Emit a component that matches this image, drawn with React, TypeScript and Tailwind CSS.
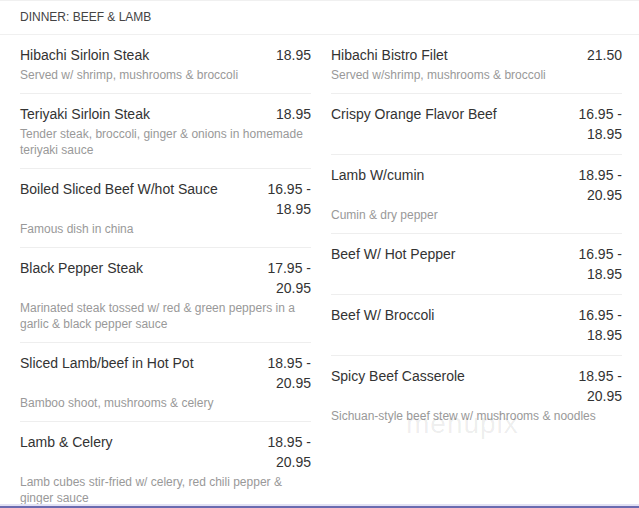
import React from 'react';

type Item = { name: string; price: string; desc?: string };

const left: Item[] = [
  { name: 'Hibachi Sirloin Steak', price: '18.95', desc: 'Served w/ shrimp, mushrooms & broccoli' },
  { name: 'Teriyaki Sirloin Steak', price: '18.95', desc: 'Tender steak, broccoli, ginger & onions in homemade teriyaki sauce' },
  { name: 'Boiled Sliced Beef W/hot Sauce', price: '16.95 - 18.95', desc: 'Famous dish in china' },
  { name: 'Black Pepper Steak', price: '17.95 - 20.95', desc: 'Marinated steak tossed w/ red & green peppers in a garlic & black pepper sauce' },
  { name: 'Sliced Lamb/beef in Hot Pot', price: '18.95 - 20.95', desc: 'Bamboo shoot, mushrooms & celery' },
  { name: 'Lamb & Celery', price: '18.95 - 20.95', desc: 'Lamb cubes stir-fried w/ celery, red chili pepper & ginger sauce' },
];

const right: Item[] = [
  { name: 'Hibachi Bistro Filet', price: '21.50', desc: 'Served w/shrimp, mushrooms & broccoli' },
  { name: 'Crispy Orange Flavor Beef', price: '16.95 - 18.95' },
  { name: 'Lamb W/cumin', price: '18.95 - 20.95', desc: 'Cumin & dry pepper' },
  { name: 'Beef W/ Hot Pepper', price: '16.95 - 18.95' },
  { name: 'Beef W/ Broccoli', price: '16.95 - 18.95' },
  { name: 'Spicy Beef Casserole', price: '18.95 - 20.95', desc: 'Sichuan-style beef stew w/ mushrooms & noodles' },
];

function MenuItem({ item, last }: { item: Item; last: boolean }) {
  return (
    <div className={`py-[10px] ${last ? '' : 'border-b border-[#eeeeee]'}`}>
      <div className="flex items-start justify-between text-[14px] leading-[20px] text-[#333333]">
        <div className="flex-1">{item.name}</div>
        <div className="w-[46px] shrink-0 text-right">{item.price}</div>
      </div>
      {item.desc && (
        <div className="mt-[2px] text-[12px] leading-[16px] text-[#999999]">{item.desc}</div>
      )}
    </div>
  );
}

export default function App() {
  return (
    <div
      className="relative flex h-[508px] w-[639px] flex-col overflow-hidden bg-white"
      style={{ fontFamily: '"Liberation Sans", Arial, sans-serif' }}
    >
      {/* Header */}
      <div className="h-[35px] shrink-0 border-t border-b border-[#f0f0f0] pl-5 text-[12px] leading-[33px] text-[#444444]">
        DINNER: BEEF &amp; LAMB
      </div>

      {/* Columns */}
      <div className="grid min-h-0 flex-1 grid-cols-[291px_291px] gap-x-5 overflow-hidden pl-5">
        <div>
          {left.map((it, i) => (
            <MenuItem key={it.name} item={it} last={i === left.length - 1} />
          ))}
        </div>
        <div>
          {right.map((it, i) => (
            <MenuItem key={it.name} item={it} last={i === right.length - 1} />
          ))}
        </div>
      </div>

      {/* Watermark */}
      <div className="pointer-events-none absolute left-[406px] top-[408px] text-[28px] font-light leading-[32px] tracking-[1px] text-[#000000]/[0.08]">
        menupix
      </div>

      {/* Bottom edge */}
      <div className="h-[2px] shrink-0 bg-[#e2e2f4]" />
      <div className="h-[2px] shrink-0 bg-[#6b6bb0]" />
    </div>
  );
}
